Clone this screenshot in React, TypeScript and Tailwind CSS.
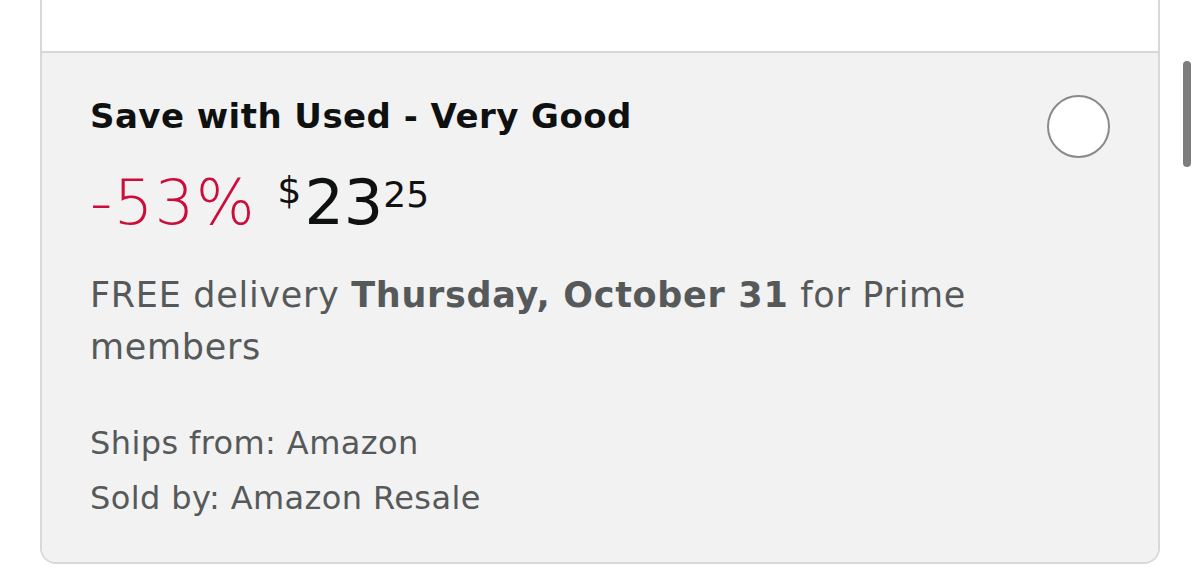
import React from "react";

export default function App() {
  return (
    <div className="relative w-[1200px] h-[583px] bg-white overflow-hidden" style={{ fontFamily: '"DejaVu Sans", "Open Sans", sans-serif' }}>
      <div className="ml-[40px] w-[1120px] border-x-2 border-b-2 border-[#d5d9d9] rounded-b-[16px] overflow-hidden">
        <div className="h-[53px] bg-white border-b-2 border-[#d5d9d9]" />
        <div className="bg-[#f2f2f2] pl-[48px] pr-[48px] pt-[42px] pb-[36px]">
          <div className="flex items-start justify-between h-[42px]">
            <div className="text-[34px] leading-[42px] font-bold tracking-[0.45px] text-[#0f1111]">Save with Used - Very Good</div>
            <div className="shrink-0 w-[63px] h-[63px] rounded-full bg-white border-2 border-[#8a8a8a]" />
          </div>
          <div className="flex items-start mt-[35px] h-[62px]">
            <span className="text-[62px] leading-none font-light tracking-[1.5px] text-[#cc0c39]">-53%</span>
            <span className="ml-[21px] mt-[-1px] text-[38px] leading-none text-[#0f1111]">$</span>
            <span className="ml-[3px] text-[62px] leading-none text-[#0f1111]">23</span>
            <span className="ml-[0px] mt-[5px] text-[36px] leading-none text-[#0f1111]">25</span>
          </div>
          <div className="mt-[35px] text-[35px] leading-[52px] tracking-[0.7px] text-[#565959] w-[930px]">
            FREE delivery <span className="font-bold">Thursday, October 31</span> for Prime members
          </div>
          <div className="mt-[43px] text-[32px] leading-[55px] tracking-[0.4px] text-[#565959]">
            <div>Ships from: Amazon</div>
            <div>Sold by: Amazon Resale</div>
          </div>
        </div>
      </div>
      <div className="absolute left-[1183px] top-[61px] w-[8px] h-[106px] rounded-full bg-[#7d7d7d]" />
    </div>
  );
}
